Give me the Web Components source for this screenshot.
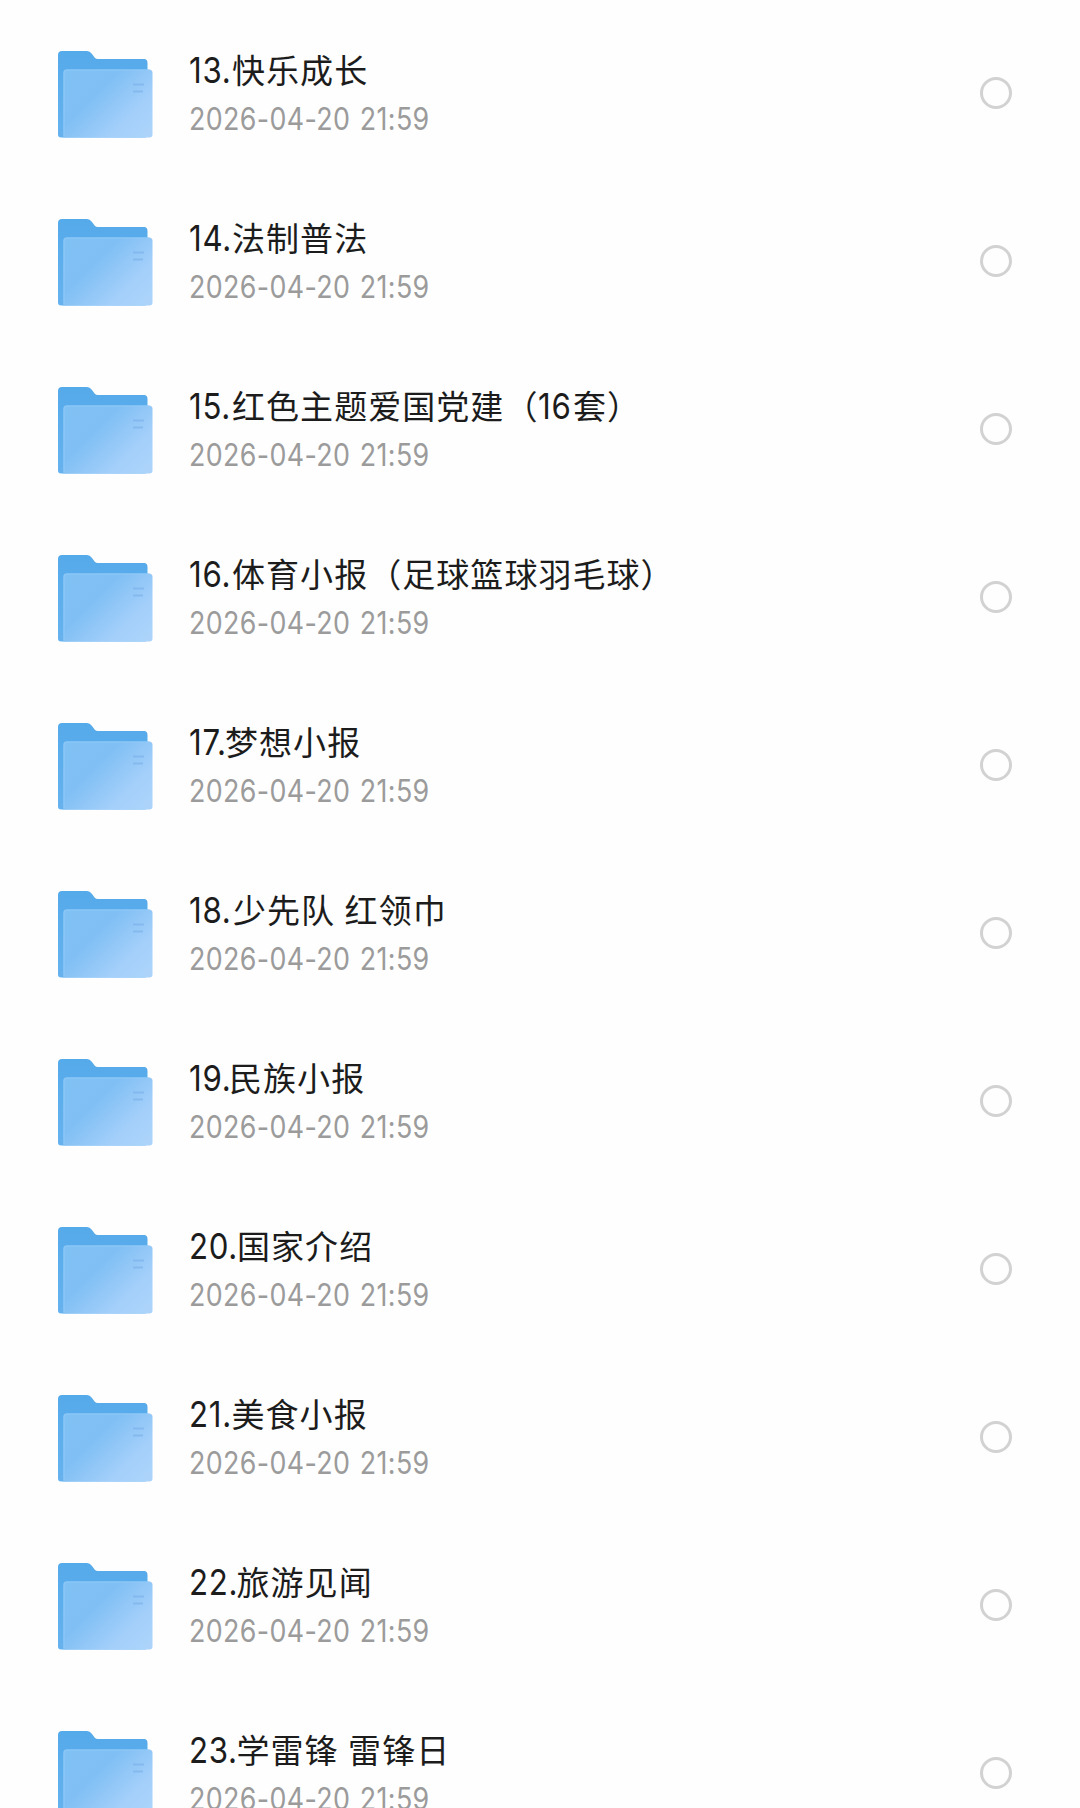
<!DOCTYPE html>
<html lang="zh-CN">
<head>
<meta charset="UTF-8">
<title>文件</title>
<style>
    html, body {
        margin: 0;
        height: 1808px;
        overflow: hidden;
        background: #fefefe;
    }
</style>
</head>
<body>
<file-list></file-list>

<script>
class FolderIcon extends HTMLElement {
    constructor() {
        super();
        const shadow = this.attachShadow({ mode: 'open' });
        shadow.innerHTML = `
        <style>
            :host {
                display: block;
                width: 96px;
                height: 88px;
                margin-top: 4px;
            }
            svg {
                display: block;
            }
        </style>
        <svg width="96" height="88" viewBox="0 0 96 88">
            <defs>
                <linearGradient id="front" gradientUnits="userSpaceOnUse" x1="14" y1="18" x2="84" y2="88">
                    <stop offset="0" stop-color="#80c1f4"/>
                    <stop offset="0.35" stop-color="#80bff4"/>
                    <stop offset="0.75" stop-color="#a3cffa"/>
                    <stop offset="1" stop-color="#acd4fb"/>
                </linearGradient>
                <linearGradient id="back" x1="0" y1="0" x2="0" y2="1">
                    <stop offset="0" stop-color="#55aaea"/>
                    <stop offset="1" stop-color="#66b2ef"/>
                </linearGradient>
            </defs>
            <path fill="url(#back)" d="M4 0H29Q32 0 34 3L37 7Q38 8 40 8H86Q89.500 8 89.500 12V84Q89.500 86.500 87 86.500H3Q0 86.500 0 83.500V4Q0 0 4 0Z"/>
            <path fill="url(#front)" d="M8 18.500H91Q94.500 18.500 94.500 22V83.500Q94.500 86.500 91.500 86.500H5.500V21Q5.500 18.500 8 18.500Z"/>
            <path fill="none" stroke="#92caf8" stroke-width="1" d="M6 85V21.500Q6 19 8.500 19H91"/>
            <path stroke="#7bb0ea" stroke-width="2" opacity=".6" d="M75 33.500H86M75 40.500H85"/>
        </svg>
        `;
    }
}

class SelectCircle extends HTMLElement {
    constructor() {
        super();
        const shadow = this.attachShadow({ mode: 'open' });
        shadow.innerHTML = `
        <style>
            :host {
                display: block;
                box-sizing: border-box;
                width: 32px;
                height: 32px;
                border: 3px solid #d2d2d2;
                border-radius: 50%;
            }
        </style>
        `;
    }
}

class FileRow extends HTMLElement {
    constructor() {
        super();
        const shadow = this.attachShadow({ mode: 'open' });
        shadow.innerHTML = `
        <style>
            :host {
                display: flex;
                align-items: center;
                box-sizing: border-box;
                height: 168px;
                padding: 0 68px 0 58px;
            }
            .info {
                flex: 1;
                margin-left: 35px;
                white-space: nowrap;
            }
            .title {
                display: flex;
                align-items: baseline;
                height: 48px;
                line-height: 48px;
                font-size: 33px;
                letter-spacing: 1.05px;
                color: #1c1c1c;
            }
            /* Inter digits, narrowed a little */
            .num, .date {
                font-family: Inter, sans-serif;
                transform: scaleX(.88);
                transform-origin: left;
            }
            .num {
                font-size: 35.5px;
                letter-spacing: 0.8px;
            }
            .name {
                white-space: pre;
                word-spacing: 1px;
            }
            .date {
                height: 48px;
                margin-top: 2px;
                margin-bottom: -2px;
                line-height: 48px;
                font-size: 30.5px;
                color: #9b9b9b;
                letter-spacing: 0.4px;
                word-spacing: 2px;
            }
        </style>
        <folder-icon></folder-icon>
        <div class="info">
            <div class="title"></div>
            <div class="date"><slot></slot></div>
        </div>
        <select-circle></select-circle>
        `;
    }

    // Each part is either digits with a fixed advance, or a run of characters.
    set title_parts(parts) {
        const title = this.shadowRoot.querySelector('.title');
        for (const { text, width } of parts) {
            const span = document.createElement('span');
            span.className = width ? 'num' : 'name';
            span.textContent = text;
            if (width) {
                span.style.width = `${width}px`;
            }
            title.appendChild(span);
        }
    }
}

class FileList extends HTMLElement {
    FILES = [
        [{ text: '13.', width: 43 }, { text: '快乐成长' }],
        [{ text: '14.', width: 43 }, { text: '法制普法' }],
        [{ text: '15.', width: 43 }, { text: '红色主题爱国党建（' }, { text: '16', width: 34.5 }, { text: '套）' }],
        [{ text: '16.', width: 43 }, { text: '体育小报（足球篮球羽毛球）' }],
        [{ text: '17.', width: 36 }, { text: '梦想小报' }],
        [{ text: '18.', width: 44 }, { text: '少先队 红领巾' }],
        [{ text: '19.', width: 40 }, { text: '民族小报' }],
        [{ text: '20.', width: 48 }, { text: '国家介绍' }],
        [{ text: '21.', width: 42.5 }, { text: '美食小报' }],
        [{ text: '22.', width: 47.5 }, { text: '旅游见闻' }],
        [{ text: '23.', width: 47.5 }, { text: '学雷锋 雷锋日' }]
    ];

    constructor() {
        super();
        const shadow = this.attachShadow({ mode: 'open' });
        shadow.innerHTML = `
        <style>
            :host {
                display: block;
                padding-top: 9px;
                font-family: "Noto Sans CJK SC", sans-serif;
            }
        </style>
        `;
        for (const parts of this.FILES) {
            const row = document.createElement('file-row');
            row.title_parts = parts;
            row.textContent = '2026-04-20 21:59';
            shadow.appendChild(row);
        }
    }
}

customElements.define('folder-icon', FolderIcon);
customElements.define('select-circle', SelectCircle);
customElements.define('file-row', FileRow);
customElements.define('file-list', FileList);
</script>
</body>
</html>
